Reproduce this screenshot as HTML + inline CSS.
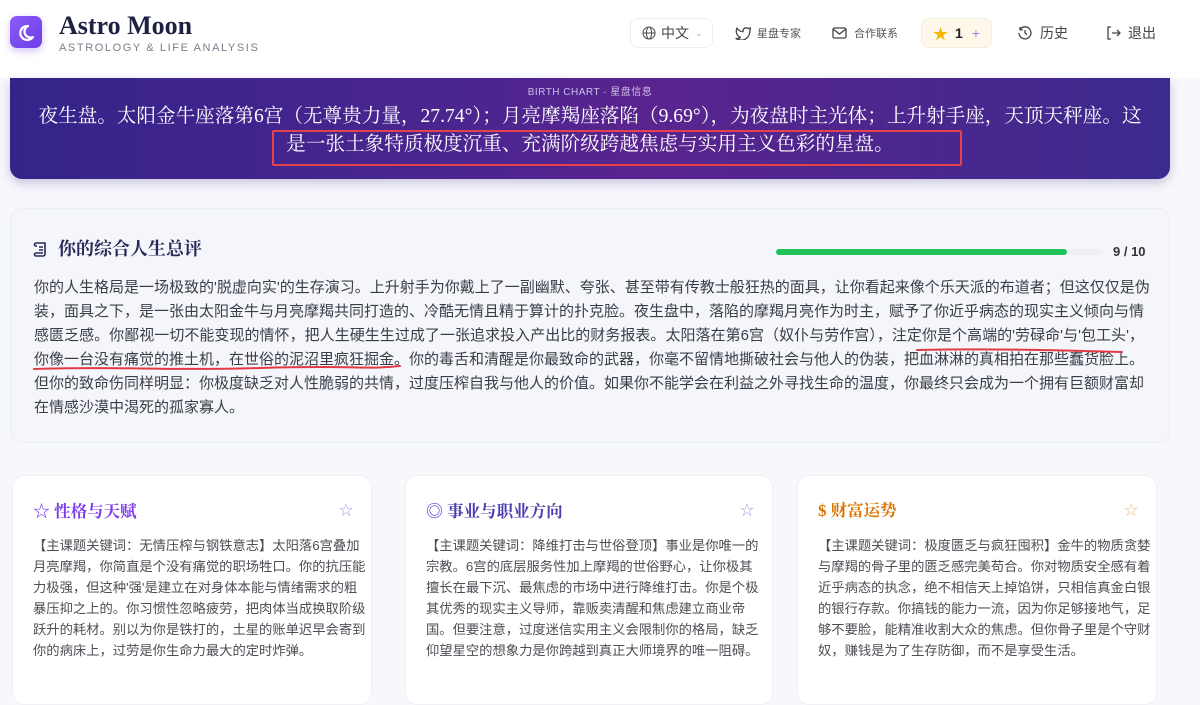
<!DOCTYPE html>
<html><head><meta charset="utf-8"><style>
*{margin:0;padding:0;box-sizing:border-box}
body{width:1200px;height:665px;overflow:hidden;background:#f7f8fb;font-family:"Liberation Sans","Noto Sans CJK SC",sans-serif;position:relative}
.hdr{position:absolute;left:0;top:0;width:1200px;height:78px;background:#fff}
.logo{position:absolute;left:10px;top:16px;width:32px;height:32px;border-radius:7px;background:linear-gradient(135deg,#8b5cf6,#6d3ee8);box-shadow:0 3px 8px rgba(109,62,232,.3)}
.t1{position:absolute;left:59px;top:11px;font-family:"Liberation Serif","Noto Serif CJK SC",serif;font-size:26px;font-weight:bold;color:#1f2140}
.t2{position:absolute;left:59px;top:42px;font-size:11px;letter-spacing:1.6px;color:#7a7f8c}
.nav{position:absolute;top:18px;height:30px;display:flex;align-items:center;font-size:14px;color:#444}
.sm{font-size:11px;color:#555}
.banner{position:absolute;left:10px;top:78px;width:1160px;height:101px;border-radius:0 0 12px 12px;background:linear-gradient(90deg,#34248a 0%,#4c2590 40%,#5a248f 55%,#3c2a8e 100%);box-shadow:0 4px 10px rgba(60,40,140,.25);color:#fff;text-align:center}
.bc{position:absolute;top:5px;width:100%;font-size:10px;letter-spacing:.5px;color:#cbbfe8}
.bt{position:absolute;left:0;right:0;top:25px;font-family:"Liberation Serif","Noto Serif CJK SC",serif;font-size:19.6px;line-height:28px;white-space:nowrap}
.rbox{position:absolute;left:272px;top:130px;width:690px;height:36px;border:2.5px solid #e5414b;border-radius:2px}
.sum{position:absolute;left:10px;top:208px;width:1160px;height:235px;border-radius:12px;background:#f5f6fc;border:1px solid #eceef6}
.h{font-family:"Liberation Serif","Noto Serif CJK SC",serif;font-weight:bold}
.p{position:absolute;left:23px;top:67px;width:1110px;font-size:15px;line-height:24px;color:#3b3d45}
.p div,.cb div{text-align:justify;text-align-last:justify;white-space:nowrap}
.p div.l,.cb div.l{text-align-last:left}
.card{position:absolute;top:475px;height:230px;background:#fff;border-radius:12px;border:1px solid #f0f1f5}
.card .ct{position:absolute;left:20px;top:21px;font-size:16.5px}
.card .cb{position:absolute;left:20px;top:59px;right:20px;font-size:13.3px;line-height:21px;color:#4e4e55}
.card .st{position:absolute;right:18px;top:24px;font-size:14px}
</style></head><body>
<div class="hdr">
<div class="logo"><svg width="32" height="32" viewBox="0 0 32 32"><path d="M18 10a7 7 0 1 0 5 11a6 6 0 0 1 -5 -11z" fill="none" stroke="#fff" stroke-width="2.2" stroke-linejoin="round"/></svg></div>
<div class="t1">Astro Moon</div>
<div class="t2">ASTROLOGY &amp; LIFE ANALYSIS</div>
<div class="nav" style="left:630px;width:83px;border:1px solid #eceef2;border-radius:8px;padding-left:11px"><svg width="14" height="14" viewBox="0 0 14 14" fill="none" stroke="#555" stroke-width="1.1"><circle cx="7" cy="7" r="6"/><ellipse cx="7" cy="7" rx="2.6" ry="6"/><path d="M1 7h12"/></svg><span style="margin-left:5px">中文</span><span style="margin-left:6px;font-size:9px;color:#aaa">⌄</span></div>
<div class="nav" style="left:735px"><svg width="16" height="14" viewBox="0 0 16 14" fill="none" stroke="#444" stroke-width="1.3" stroke-linejoin="round"><path d="M15 2l-2 .6a3 3 0 0 0-5 2.3v.8A7 7 0 0 1 2 2s-3 6.5 3.5 9.5A8 8 0 0 1 1 12.5c7 4 14 0 14-8.5l1-2z"/></svg><span class="sm" style="margin-left:6px">星盘专家</span></div>
<div class="nav" style="left:832px"><svg width="15" height="12" viewBox="0 0 15 12" fill="none" stroke="#444" stroke-width="1.3"><rect x="1" y="1" width="13" height="10" rx="1.5"/><path d="M1 2l6.5 5L14 2"/></svg><span class="sm" style="margin-left:7px">合作联系</span></div>
<div class="nav" style="left:921px;width:71px;background:#fdf8ea;border:1px solid #f3eee0;border-radius:8px;padding-left:11px"><span style="color:#f5b800;font-size:15px">★</span><span style="margin-left:7px;font-weight:bold;color:#222">1</span><span style="margin-left:9px;color:#b07ae8">+</span></div>
<div class="nav" style="left:1018px"><svg width="14" height="14" viewBox="0 0 14 14" fill="none" stroke="#444" stroke-width="1.3"><path d="M2 3.5A6 6 0 1 1 1 7"/><path d="M2 1v2.8h2.8M7 4v3l2 1.5"/></svg><span style="margin-left:8px">历史</span></div>
<div class="nav" style="left:1106px"><svg width="15" height="14" viewBox="0 0 15 14" fill="none" stroke="#444" stroke-width="1.3"><path d="M5 1H2v12h3M6 7h8M11 4l3 3-3 3"/></svg><span style="margin-left:7px">退出</span></div>
</div>
<div class="banner">
<div class="bc">BIRTH CHART · 星盘信息</div>
<div class="bt">夜生盘。太阳金牛座落第6宫（无尊贵力量，27.74°）；月亮摩羯座落陷（9.69°），为夜盘时主光体；上升射手座，天顶天秤座。这<br>是一张土象特质极度沉重、充满阶级跨越焦虑与实用主义色彩的星盘。</div>
</div>
<div class="rbox"></div>
<div class="sum">
<div class="h" style="position:absolute;left:22px;top:26px;font-size:18px;color:#262a57"><svg width="16" height="16" viewBox="0 0 16 16" fill="none" stroke="#262a57" stroke-width="1.6" style="vertical-align:-2px;margin-right:9px"><path d="M3 2h9v11a2 2 0 0 1-2 2H3M3 2a1.5 1.5 0 0 0 0 3h1M3 15a1.5 1.5 0 0 1 0-3h7M6 6h4M6 9h4"/></svg>你的综合人生总评</div>
<div style="position:absolute;left:765px;top:40px;width:325px;height:6px;border-radius:3px;background:#eef0f3"><div style="width:291px;height:6px;border-radius:3px;background:#22c25a"></div></div>
<div style="position:absolute;left:1102px;top:35px;font-size:13px;font-weight:bold;color:#333">9 / 10</div>
<div class="p">
<div>你的人生格局是一场极致的'脱虚向实'的生存演习。上升射手为你戴上了一副幽默、夸张、甚至带有传教士般狂热的面具，让你看起来像个乐天派的布道者；但这仅仅是伪</div>
<div>装，面具之下，是一张由太阳金牛与月亮摩羯共同打造的、冷酷无情且精于算计的扑克脸。夜生盘中，落陷的摩羯月亮作为时主，赋予了你近乎病态的现实主义倾向与情</div>
<div>感匮乏感。你鄙视一切不能变现的情怀，把人生硬生生过成了一张追求投入产出比的财务报表。太阳落在第6宫（奴仆与劳作宫），注定你是个高端的'劳碌命'与'包工头'，</div>
<div>你像一台没有痛觉的推土机，在世俗的泥沼里疯狂掘金。你的毒舌和清醒是你最致命的武器，你毫不留情地撕破社会与他人的伪装，把血淋淋的真相拍在那些蠢货脸上。</div>
<div>但你的致命伤同样明显：你极度缺乏对人性脆弱的共情，过度压榨自我与他人的价值。如果你不能学会在利益之外寻找生命的温度，你最终只会成为一个拥有巨额财富却</div>
<div class="l">在情感沙漠中渴死的孤家寡人。</div>
</div>
</div>
<svg style="position:absolute;left:0;top:0" width="1200" height="665" fill="none" stroke="#e23a44" stroke-width="2" stroke-linecap="round"><path d="M34 369C120 366 160 371 260 368S360 370 400 366"/><path d="M917 350C1000 348 1080 351 1122 352"/></svg>
<div class="card" style="left:12px;width:360px"><div class="ct h" style="color:#7c3aed"><span style="font-size:17px">☆</span> 性格与天赋</div><div class="st" style="color:#b49be8">☆</div><div class="cb">
<div>【主课题关键词：无情压榨与钢铁意志】太阳落6宫叠加</div>
<div>月亮摩羯，你简直是个没有痛觉的职场牲口。你的抗压能</div>
<div>力极强，但这种'强'是建立在对身体本能与情绪需求的粗</div>
<div>暴压抑之上的。你习惯性忽略疲劳，把肉体当成换取阶级</div>
<div>跃升的耗材。别以为你是铁打的，土星的账单迟早会寄到</div>
<div class="l">你的病床上，过劳是你生命力最大的定时炸弹。</div></div></div>
<div class="card" style="left:405px;width:368px"><div class="ct h" style="color:#4a3db0"><span style="font-size:17px;color:#5b3fd0">◎</span> 事业与职业方向</div><div class="st" style="color:#a9a3dd">☆</div><div class="cb">
<div>【主课题关键词：降维打击与世俗登顶】事业是你唯一的</div>
<div>宗教。6宫的底层服务性加上摩羯的世俗野心，让你极其</div>
<div>擅长在最下沉、最焦虑的市场中进行降维打击。你是个极</div>
<div class="l">其优秀的现实主义导师，靠贩卖清醒和焦虑建立商业帝</div>
<div>国。但要注意，过度迷信实用主义会限制你的格局，缺乏</div>
<div class="l">仰望星空的想象力是你跨越到真正大师境界的唯一阻碍。</div></div></div>
<div class="card" style="left:797px;width:360px"><div class="ct h" style="color:#d97706"><span style="font-size:17px">$</span> 财富运势</div><div class="st" style="color:#e8c08a">☆</div><div class="cb">
<div>【主课题关键词：极度匮乏与疯狂囤积】金牛的物质贪婪</div>
<div>与摩羯的骨子里的匮乏感完美苟合。你对物质安全感有着</div>
<div>近乎病态的执念，绝不相信天上掉馅饼，只相信真金白银</div>
<div>的银行存款。你搞钱的能力一流，因为你足够接地气，足</div>
<div>够不要脸，能精准收割大众的焦虑。但你骨子里是个守财</div>
<div class="l">奴，赚钱是为了生存防御，而不是享受生活。</div></div></div>
</body></html>
